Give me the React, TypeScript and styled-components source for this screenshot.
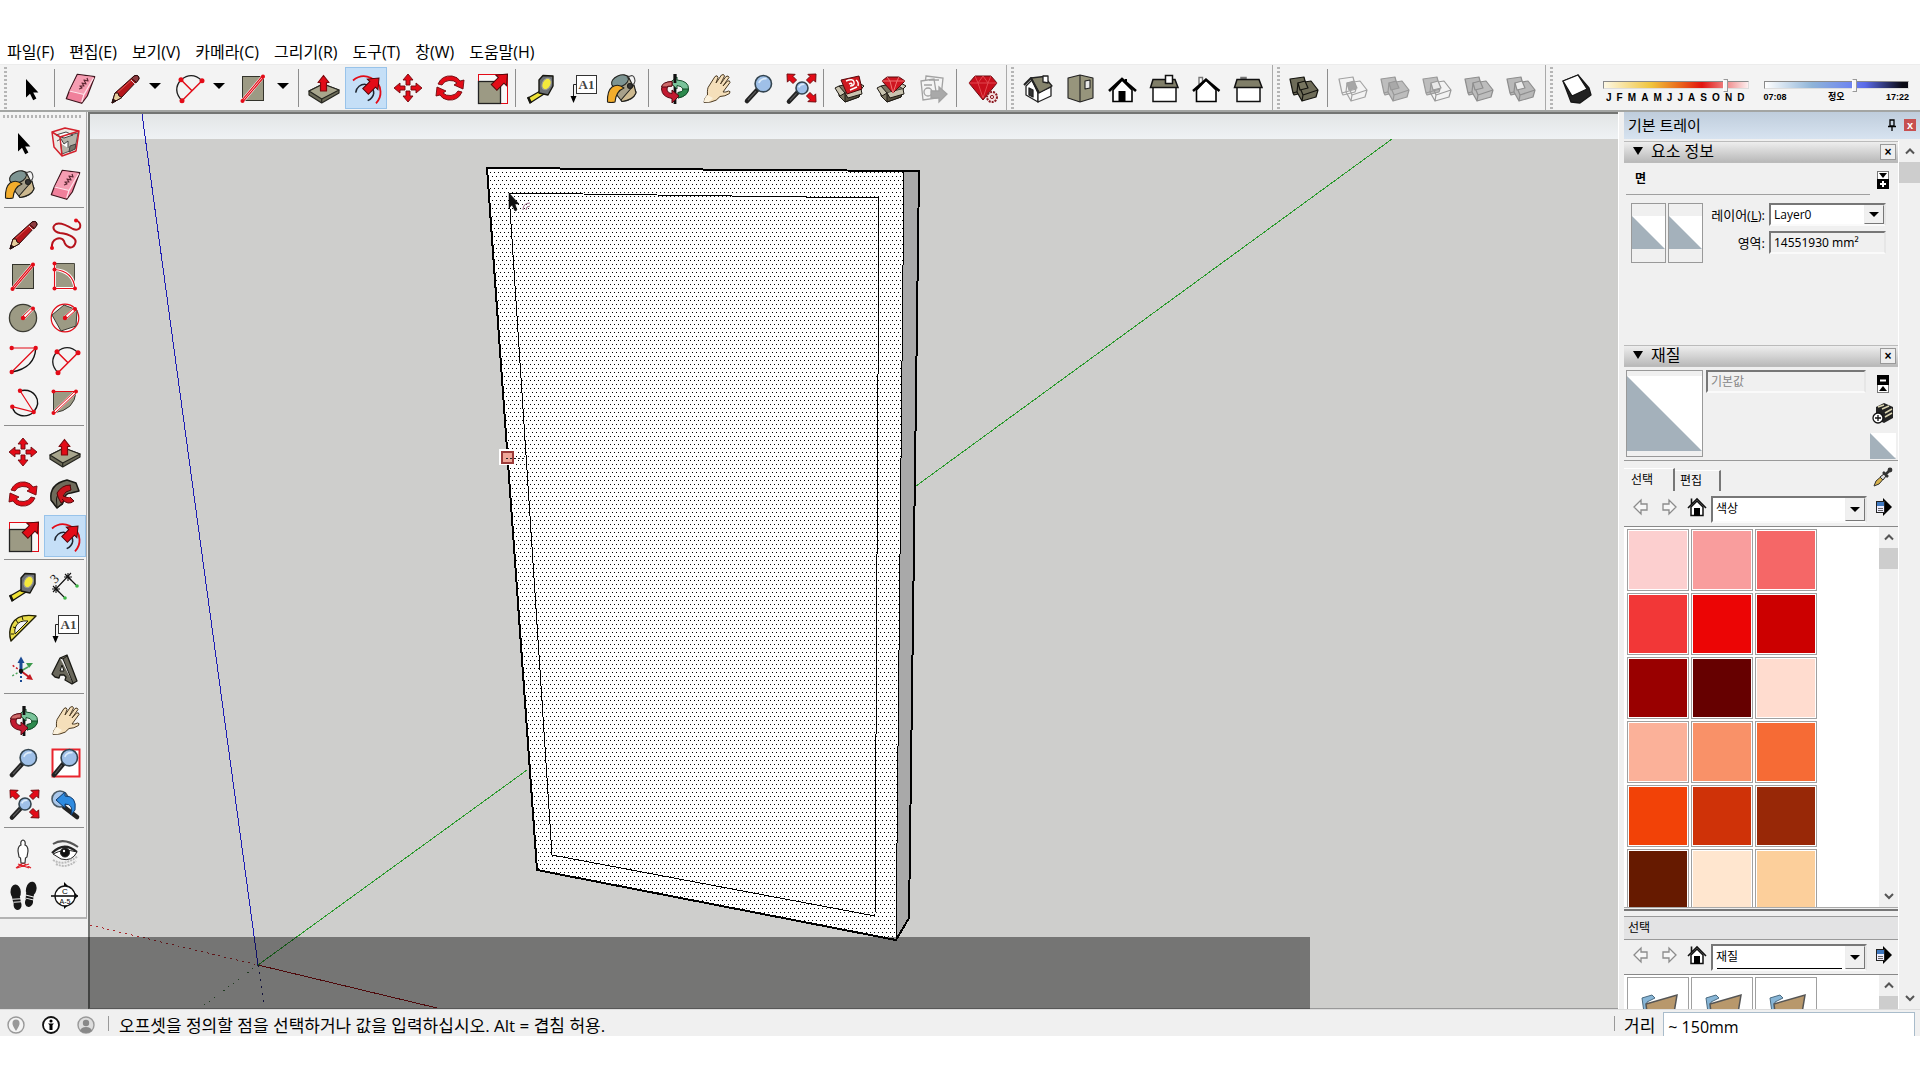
import React from "react";
import styled, { createGlobalStyle, css } from "styled-components";

const Global = createGlobalStyle`
  *, *::before, *::after { box-sizing: border-box; }
  body { margin: 0; background: #fff; color: #000; font-family: "Open Sans", "Noto Sans CJK KR", sans-serif; font-size: 16px; }
  button, input, select { font: inherit; color: inherit; margin: 0; padding: 0; border: 0; background: none; border-radius: 0; outline: 0; }
`;

const RED = "#e30b17";
const OLIVE = "#9c9a84";

/* ---------- icons (all drawn in a 42 × 42 cell) ---------- */

const dot = (x: number, y: number, r = 2) => <circle key={`${x}-${y}`} cx={x} cy={y} r={r} fill={RED} stroke="none" />;
const bigArrow = (x: number, y: number) => (
  <path transform={`translate(${x} ${y}) rotate(45)`} d="M0 0 L7.5 9 H4 V19 H-4 V9 H-7.5 Z" fill={RED} stroke="#4d0608" />
);
const lens = (x: number, y: number, r: number, hx: number, hy: number) => (
  <g>
    <path d={`M${x - r * 0.7} ${y + r * 0.7} L${hx} ${hy}`} stroke="#222" strokeWidth="4.6" strokeLinecap="round" />
    <path d={`M${x - r * 0.9} ${y + r * 0.9} L${hx + 1} ${hy - 1}`} stroke="#5a5a5a" strokeWidth="1.2" />
    <circle cx={x} cy={y} r={r} fill="#9fc0e8" stroke="#33444f" strokeWidth="1.6" />
    <path d={`M${x - r * 0.55} ${y - r * 0.1} Q${x - r * 0.3} ${y - r * 0.7} ${x + r * 0.4} ${y - r * 0.6}`} stroke="#dcebfa" strokeWidth="1.6" fill="none" />
  </g>
);
const solids = (a: string, b: string, c: string, line: string) => (
  <g stroke={line} strokeWidth="1.2" strokeLinejoin="round">
    <path d="M7 12 L21 10 L24 22 L10 26 Z M10 26 L24 22 L23 25 L11 28 Z" fill={a} />
    <path d="M15 16 L28 14 L35 23 L20 28 Z M20 28 L35 23 L33 30 L19 34 Z M15 16 L14 25 L19 34 L20 28 Z" fill={b} />
    <path d="M15 16 L22 14 L25 21 L17 23 Z" fill={c} />
  </g>
);
const carton = (
  <g stroke="#1c1812" strokeWidth="1">
    <path d="M11 19 L25 16 L33 22 L31 30 L17 35 L11 29 Z" fill="#7b7561" />
    <path d="M17 26 L33 22 L31 30 L17 35 Z" fill="#57513f" />
    <path d="M17 26 L11 19 L7 21 L12 29 Z M33 22 L36 19 L29 15 M17 26 L20 31 L34 27 L33 22" fill="#c9c4b0" />
  </g>
);

const ICONS: Record<string, React.ReactNode> = {
  select: <path d="M16 12 V30.5 L20 26.8 L23.2 33.2 L26.4 31.6 L23.2 25.6 L28.4 25.4 Z" fill="#000" />,
  eraser: (
    <g stroke="#3b141c" strokeWidth="1.2" strokeLinejoin="round">
      <path d="M18.3 7.3 L35.7 9.7 L28.3 29 L22.7 36.3 L7.3 31.7 L10.3 23.7 Z" fill="#f0809b" />
      <path d="M18.8 8 L35 10 L26 28 L11 23.3 Z" fill="#f59db2" stroke="none" />
      <path d="M10.5 24 L25 27.5 L34.5 11 M25 27.5 L22.7 35" stroke="#fde4ea" fill="none" />
      <path d="M20 22 l3 -1 l-2 -2 l4 0 l-2 -3 l4 1 l-2 -4 l4 1 l-1 -3" fill="none" stroke="#5c2833" />
    </g>
  ),
  pencil: (
    <g stroke="#2c0a0a" strokeWidth="1" strokeLinejoin="round">
      <path d="M8 36 L11 26 L30 9 Q35 7 35 12 L17 31 Z" fill="#b5161b" />
      <path d="M12 27 L31 10" stroke="#d9544e" />
      <path d="M8 36 L11 26 L14 26 L15 29 L18 30.5 Z" fill="#e5cd9c" />
      <path d="M8 36 L9 32 L12 34 Z" fill="#222" />
      <path d="M27.5 11.5 L32.5 15.5 L35 12 Q35 7 30 9 Z" fill="#8e3c40" />
      <path d="M27 13 L31 17" stroke="#ddd" />
    </g>
  ),
  arc: (
    <g fill="none" strokeWidth="1.3">
      <path d="M14 33.7 Q4 23 13 12.7 Q24 4 34 13.7" stroke="#1b1b1b" />
      <path d="M34 13.7 L14 33.7 M13 12.7 L24 23.7" stroke={RED} strokeWidth="1.5" />
      {dot(13, 12.7, 2.5)}{dot(34, 13.7, 2.5)}{dot(14, 33.7, 2.5)}
    </g>
  ),
  rect: (
    <g>
      <rect x="10.5" y="9.5" width="21" height="24" fill={OLIVE} stroke="#33332b" />
      <path d="M10.5 34 L31 9.5" stroke="#fff" strokeWidth="4" />
      <path d="M11 34.6 L32 10 M9.6 33.6 L30.4 9" stroke={RED} strokeWidth="1.2" />
      {dot(31, 9.5)}{dot(10.5, 34)}
    </g>
  ),
  pushpull: (
    <g stroke="#25251f" strokeWidth="1.2" strokeLinejoin="round">
      <path d="M6 24 L20 17 L36 23 V26 L18.7 36 L6 28 Z" fill="#6c6b58" />
      <path d="M6 24 L20 17 L36 23 L18.7 32 Z" fill="#a8a68d" />
      <path d="M18.7 32 V36" />
      <path d="M20.5 8.5 L26 15.5 H23.5 V24 H17.5 V15.5 H15 Z" fill={RED} stroke="#7d090e" />
    </g>
  ),
  offset: (
    <g fill="none">
      <path d="M8 13.5 C19 4 35 12 35.5 24.5 Q36 31 31 36.3" stroke={RED} strokeWidth="1.8" />
      <path d="M10.7 25.7 C12 14 29 15 28.7 26.3 Q28 31 22.7 33.7" stroke="#1e2530" strokeWidth="1.5" />
      {bigArrow(34, 11)}
    </g>
  ),
  move: <g>{[0, 90, 180, 270].map((a) => <path key={a} transform={`rotate(${a} 21 21)`} d="M21 7 L26 13 H23 V18 H19 V13 H16 Z" fill={RED} stroke="#6e0a0e" strokeWidth=".9" />)}</g>,
  rotate: (
    <g fill={RED} stroke="#6e0a0e" strokeWidth=".9" strokeLinejoin="round">
      {[0, 180].map((a) => <path key={a} transform={`rotate(${a} 21 21)`} d="M9 17 Q13 8 23 9 Q29 10 31 14 L35 13 L34 22 L25 18 L28 16 Q25 13 20 13.5 Q15 14 13 18 Z" />)}
    </g>
  ),
  scale: (
    <g>
      <rect x="7.5" y="7.5" width="29" height="29" fill="#f8f8f8" stroke={RED} />
      <rect x="7.5" y="14.5" width="22" height="22" fill={OLIVE} stroke="#222" strokeWidth="1.3" />
      {bigArrow(36.5, 7)}
    </g>
  ),
  tape: (
    <g stroke="#16160f" strokeLinejoin="round">
      <path d="M8 31 L22 23 L24 27 L10 36 Z" fill="#efe236" strokeWidth="1.4" />
      <path d="M8 30 L11 36" strokeWidth="2.4" />
      <path d="M19 13 L23 8.5 L33 9 V19 L28 28 L19 26 Z" fill="#6c7074" strokeWidth="1.4" />
      <ellipse cx="26.5" cy="17" rx="4.2" ry="6" transform="rotate(28 26.5 17)" fill="#f4e93a" stroke="#999" />
    </g>
  ),
  text: (
    <g>
      <rect x="14.5" y="8.5" width="20" height="18" fill="#fff" stroke="#333" />
      <text x="24.5" y="22" fontFamily="Liberation Serif, serif" fontSize="13" fontWeight="700" textAnchor="middle" fill="#444">A1</text>
      <path d="M14 17.5 H11.5 V30" fill="none" stroke="#222" /><path d="M8.5 29 H14.5 L11.5 36 Z" />
    </g>
  ),
  bucket: (
    <g stroke="#20201c" strokeWidth="1.1" strokeLinejoin="round">
      <path d="M9 15 L24 9 L32 25 Q30 33 18 34.5 L12 27 Z" fill="#a7a08a" />
      <path d="M17 33 L30 18 L32 26 Q29 33 18 34.5 Z" fill="#cdb98f" />
      <ellipse cx="16" cy="14" rx="9" ry="5.5" transform="rotate(-24 16 14)" fill="#7d9492" />
      <path d="M23 11 Q30 5 31 14 Q30 20 24 17" fill="none" stroke="#444" />
      <path d="M3.5 35 Q3 24 8 20 Q14 16 20 21 Q12 24 11 35 Q7 36 3.5 35 Z" fill="#f3ad2c" />
      <circle cx="26" cy="19" r="2.5" fill="#333" />
    </g>
  ),
  orbit: (
    <g strokeLinejoin="round">
      <path d="M22 7 V37" stroke="#111" strokeWidth="2.8" />
      <path d="M24 13 Q36 14 35.5 22 Q35 29 25 31 V25.5 Q30 25 30 22 Q29 19 24 18.5 V22 L17 15.5 L24 10 Z" fill="#79c39a" stroke="#174e2c" />
      <path d="M30 22 H35.5 Q35 29 25 31 V25.5 Q30 25 30 22 Z" fill="#2c8a4d" stroke="#174e2c" />
      <path d="M19 14.5 Q9 15 8.5 22 Q9 30 19 31.5 V36 L26 29 L19 23 V26.5 Q14 26 14 22 Q14 19 19 19 Z" fill="#c21a30" stroke="#560912" />
      <path d="M19 14.5 Q9 15 8.5 20 H14 Q14 19 19 19 Z" fill="#cf6a6a" stroke="#560912" />
      <path d="M22 7 V16" stroke="#111" strokeWidth="2.8" />
    </g>
  ),
  hand: (
    <g stroke="#4b3a22" strokeWidth="1" strokeLinejoin="round" strokeLinecap="round">
      <path d="M9 35 Q9 31 12.5 28 Q12 21 14 19 L20 9.5 Q22.5 7.5 23 10.5 L21 16 L26.5 8 Q29 6.5 29.5 9 L25.5 17 L31 9.5 Q33.5 8 34 10.5 L28 19 L32.5 14 Q35 13 35 15.5 L28 25 Q31 25.5 33.5 24 Q36 24 34.5 26.5 Q30 29.5 25 29.5 Q22 34 16 35 Z" fill="#f5dfba" />
      <path d="M9 35 Q9 31 12.5 28 L18 31 L14 35 Z" fill="#fbf1dc" stroke="none" />
    </g>
  ),
  zoom: lens(26.3, 16.7, 8.2, 10, 34),
  zoomwin: (<g><rect x="8.5" y="8.5" width="27" height="27" fill="#fff" stroke="#e9242d" strokeWidth="2" />{lens(25.3, 16.7, 8.2, 10, 34)}</g>),
  extents: (
    <g>
      {lens(23, 21, 6, 10, 34.5)}
      {[[8, 7, -45], [37, 7, 45], [37, 35, 135]].map(([x, y, a]) => <path key={`${x}${y}`} transform={`translate(${x} ${y}) rotate(${a})`} d="M0 0 L5.5 6 H2.5 V11 H-2.5 V6 H-5.5 Z" fill={RED} stroke="#6e0a0e" strokeWidth=".9" />)}
    </g>
  ),
  previous: (
    <g>
      <path d="M20 24 L33 34" stroke="#222" strokeWidth="4.6" strokeLinecap="round" />
      <circle cx="16" cy="16" r="8" fill="#a9c7ea" stroke="#4a5a66" strokeWidth="1.6" />
      <path d="M12 17 L21 9 V13 Q33 13 31 27 L27 32 Q30 21 21 21 V25 Z" fill="#2e8be0" stroke="#103a6b" />
    </g>
  ),
  warehouse: (<g>{carton}<path d="M13 13 L31 9 L34 22 L19 27 Z" fill="#cf1a21" stroke="#58080b" /><path d="M18 14 q7 -3 8 1 q1 4 -4 4 M21 17 q3 -2 3 1 M22 23 l7 -3 M28 13 q3 2 2 6" fill="none" stroke="#fff" strokeWidth="1.4" /></g>),
  extwarehouse: (<g>{carton}<path d="M12 14 L17 10 H29 L35 14 L23 26 Z" fill="#cf1520" stroke="#58080b" /><path d="M12 14 H35 M17 10 L20 14 L23 26 L27 14 L29 10" fill="none" stroke="#ee7272" /></g>),
  layout: (
    <g fill="#f4f4f4" stroke="#a2a2a2" strokeWidth="1.3">
      <path d="M14 9 L31 11 L29 30 L12 28 Z" /><path d="M9 14 L22 12 L25 31 L11 33 Z" />
      <circle cx="16" cy="25" r="4" /><path d="M17 13 H27 M12 18 H20" />
      <path d="M19 24 H27 V20 L35 27 L27 35 V31 H19 Z" fill="#a9a9a9" />
    </g>
  ),
  gem: (
    <g strokeLinejoin="round">
      <path d="M8 16 L14 9 H30 L36 16 L22 33 Z" fill="#c80f1c" stroke="#6a0a10" />
      <path d="M14 9 L17 16 L22 9 L27 16 L30 9 M8 16 H36 M17 16 L22 31 L27 16" fill="none" stroke="#e0474e" />
      <circle cx="31" cy="30" r="5" fill="#f3dede" stroke="#8b1a22" strokeWidth="2" strokeDasharray="2 1" /><circle cx="31" cy="30" r="1.6" fill="none" stroke="#8b1a22" />
    </g>
  ),
  iso: (
    <g stroke="#222" strokeWidth="1.3" strokeLinejoin="round">
      <path d="M9 19 L15 13 L21 26 V35 L9 28 Z" fill="#fff" /><path d="M21 26 L34 20 V29 L21 35 Z" fill="#fff" />
      <path d="M14 11 L27 9.5 L35 19 L22 26 Z" fill="#85836c" /><path d="M7 18 L14 11 L22 26" fill="none" strokeWidth="2" />
      <path d="M26 9 H31 V16 L26 15 Z" fill="#fff" /><path d="M12 21 L16 23 V30 L12 28 Z" fill="#333" />
    </g>
  ),
  top: (<g stroke="#222" strokeWidth="1.1" strokeLinejoin="round"><path d="M9 11 L21 8 L34 11 V31 L21 35 L9 31 Z" fill="#97957c" /><path d="M21 8 V35" fill="none" /><path d="M26 14 L31 13 V21 L26 22 Z" fill="#e8e8e8" /></g>),
  front: (<g><path d="M12 23 V34.5 H31 V23 L21 13 Z" fill="#fff" stroke="#000" strokeWidth="1.6" /><path d="M8 24 L21 12 L35 24" fill="none" stroke="#000" strokeWidth="2.6" /><rect x="17.5" y="24" width="7" height="11" fill="#000" /><path d="M25 12 V16" stroke="#000" strokeWidth="2" /></g>),
  right: (<g stroke="#111" strokeWidth="1.5"><rect x="10" y="20" width="23" height="14.5" fill="#fff" /><path d="M10 12.5 H32 L35 20.5 H7.5 Z" fill="#807e68" /><rect x="22.5" y="8.5" width="7" height="8" fill="#fff" /></g>),
  back: (<g><path d="M14 10.5 H17.5 V17 H14 Z" fill="#fff" stroke="#777" strokeWidth="1.4" /><path d="M11.5 23 V34.5 H31 V23 L21 13 Z" fill="#fff" stroke="#000" strokeWidth="1.6" /><path d="M8 24 L21 12.5 L34.5 24" fill="none" stroke="#000" strokeWidth="2.4" /></g>),
  left: (<g stroke="#111" strokeWidth="1.5"><rect x="10" y="20" width="23" height="14.5" fill="#fff" /><rect x="14" y="10.5" width="5" height="3" fill="#777" stroke="#777" /><path d="M10 12.5 H32 L35 20.5 H7.5 Z" fill="#807e68" /></g>),
  shell: solids("#6d6b58", "#6f6d59", "#77755f", "#14140f"),
  intersect: solids("none", "none", "#a6a6a6", "#a3a3a3"),
  union: solids("#bdbdbd", "#bdbdbd", "#a9a9a9", "#989898"),
  subtract: solids("#bdbdbd", "none", "#e8e8e8", "#9a9a9a"),
  trim: solids("#b8b8b8", "#bdbdbd", "#b8b8b8", "#8e8e8e"),
  split: solids("#b8b8b8", "#b8b8b8", "#ececec", "#8e8e8e"),
  shadow: (<g stroke="#161616" strokeWidth="1.3" strokeLinejoin="round"><path d="M7 14 L22 8 L33 21 L35 28 L24 36 L15 35 Z" fill="#222" /><path d="M7 14 L22 8 L31 22 L16 29 Z" fill="#fff" /></g>),
  component: (
    <g strokeLinejoin="round">
      <path d="M8 11 L21 7 L35 10 L32 30 L18 35 L10 26 Z" fill="#ece9e4" /><path d="M16 16 L34 12 L31 28 L18 33 Z" fill="#b5b3a8" stroke="#555" />
      <path d="M12 14 L22 11 L29 14 L20 17 Z M13 20 L17 18 L20 23 L24 20 L24 27" fill="#fff" stroke="#444" />
      <path d="M26 25 L32 23 L31 28 L25 31 Z" fill="#77756a" stroke="#444" />
      <path d="M8 11 L21 7 L35 10 L32 30 L18 35 L10 26 Z M8 11 L16 16 L35 10 M16 16 L18 35" fill="none" stroke="#d3212c" strokeWidth="1.5" />
    </g>
  ),
  freehand: (<g fill="none"><path d="M32 7 C39 11 37 19 29 16 C24 13 17 9 12 11 C7 14 10 19 16 20 C25 21 34 25 31 31 C28 38 21 33 20 28 C17 23 7 25 8 35" stroke="#b5131c" strokeWidth="2" />{dot(32, 7.5)}{dot(8, 35)}</g>),
  rotrect: (
    <g fill="none">
      <rect x="10.5" y="8.5" width="20" height="25" fill={OLIVE} /><path d="M10.5 14.5 V8.5 H30.5 V33" stroke="#4a4a40" />
      <path d="M10.5 8 V33.5 H31 Q29 16 10.5 14.5" stroke="#fff" strokeWidth="3" /><path d="M10.5 8 V33.5 H31 Q29 16 10.5 14.5" stroke={RED} strokeWidth="1.2" />
      {dot(10.5, 8.5)}{dot(10.5, 14.5)}{dot(10.5, 33.5)}{dot(31, 33.5)}
    </g>
  ),
  circle: (<g><circle cx="21" cy="21" r="13.6" fill={OLIVE} stroke="#3b3b33" strokeWidth="1.3" /><path d="M21 21 L31 11" stroke="#fff" strokeWidth="4" /><path d="M20 20 L30 10.5 M22 22 L31.5 12" stroke={RED} />{dot(21, 21, 2.2)}{dot(31, 11.5)}</g>),
  polygon: (<g><circle cx="21" cy="21" r="13.8" fill="#f8f8f8" stroke={RED} strokeWidth="1.2" /><path d="M8 18 L20 8 L33 13 L32 29 L17 34 Z" fill={OLIVE} stroke="#3b3b33" /><path d="M21 21 L31 12" stroke="#fff" strokeWidth="4" /><path d="M20 20 L30 11 M22 22 L32 13" stroke={RED} />{dot(21, 21, 2.2)}{dot(31, 12)}</g>),
  arc2: (<g fill="none"><path d="M33.7 9 Q33 29 9.7 33" stroke="#111" strokeWidth="1.4" /><path d="M9.7 9 H33.7 L9.7 33" stroke={RED} strokeWidth="1.2" />{dot(9.7, 9, 2.2)}{dot(33.7, 9, 2.2)}{dot(9.7, 33, 2.2)}</g>),
  arc3: (<g fill="none"><path d="M18 9.7 C32 7 41 19 31.7 31 C24 38 12 35 10.3 25.7" stroke="#111" strokeWidth="1.4" /><path d="M18 9.7 L31.7 31 L10.3 25.7" stroke={RED} strokeWidth="1.2" />{dot(18, 9.7, 2.2)}{dot(31.7, 31, 2.2)}{dot(10.3, 25.7, 2.2)}</g>),
  pie: (<g><path d="M9.5 10.5 H32 Q31 29 9.5 32 Z" fill={OLIVE} stroke="#3b3b33" /><path d="M9.5 32 L32 10.5" stroke="#fff" strokeWidth="3.6" /><path d="M9 31 L31 10 M10 33 L33 11 M9.5 10.5 H32" stroke={RED} />{dot(9.5, 10.5)}{dot(32, 10.5)}{dot(9.5, 32)}</g>),
  follow: (
    <g stroke="#191914" strokeLinejoin="round">
      <path d="M7 27 Q5 11 23 7 L32 10 L35 18 L27 20 Q20 20 19 30 L13 35 Z" fill="#6f6b5b" strokeWidth="1.5" />
      <path d="M13 34 Q9 16 27 12 M19 31 L13 35 L7 27" fill="none" />
      <path d="M13 20 Q18 12 26 12 L27 17 Q21 18 19 23 L25 25 L17 30 L14 24 Z" fill="#c9141d" stroke="#520608" />
      <path d="M18 26 Q24 33 30 28 L26 24" fill="#c9141d" stroke="#520608" />
    </g>
  ),
  dimension: (
    <g fill="none" stroke="#111" strokeWidth="1.1">
      <path d="M9 27 L27 8 M12 24 L20 32 M24 12 L32 20" /><path d="M12 20 V28 M8 24 H16 M9 21 L15 27 M24 8 V16 M20 12 H28 M21 9 L27 15" />
      <text x="8" y="17" transform="rotate(-45 12 14)" fontFamily="Liberation Serif, serif" fontSize="13" fill="#111" stroke="none">3</text>
      <circle cx="33" cy="21" r="1.8" fill="#3db546" stroke="none" /><circle cx="21" cy="33" r="1.8" fill="#3db546" stroke="none" />
    </g>
  ),
  protractor: (<g stroke="#1f1d05" strokeLinejoin="round"><path d="M34 9 Q16 6 10 17 Q6 25 9 34 L34 9 Z" fill="#e9dc49" strokeWidth="1.4" /><path d="M26 14 Q17 13 14 19 Q12 23 13 27 Z" fill="#f4f4f4" /><path d="M11 20 L14 21 M14 13 L16 16 M20 9.5 L21 13 M9 27 L12 27" /></g>),
  axes: (
    <g strokeWidth="2" fill="none">
      <path d="M19 22 V12" stroke="#1a4a94" strokeWidth="3" /><path d="M15.5 14 L19 7.5 L22.5 14 Z" fill="#1a4a94" />
      <path d="M19 22 L26 18" stroke="#4aa35a" strokeWidth="1.5" /><path d="M24 14 L31 14 L27 19 Z" fill="#3c9a4c" />
      <path d="M19 22 L27 28" stroke="#c41820" /><path d="M24 30 L31 31 L28 25 Z" fill="#c41820" />
      <path d="M19 23 V34" stroke="#1a4a94" strokeDasharray="2 2" /><path d="M19 22 L10 27" stroke="#4aa35a" strokeWidth="1.5" strokeDasharray="2 2" /><path d="M19 22 L10 16" stroke="#c41820" strokeWidth="1.5" strokeDasharray="2 2" />
      <circle cx="19" cy="22" r="2.2" fill="#111" />
    </g>
  ),
  text3d: (<g stroke="#191914" strokeLinejoin="round"><path d="M16 9 L23 6 L33 32 L28 35 L21 31 L22 28 L20 26 L16 26 L15 29 L11 28 L8 25 Z" fill="#69675b" strokeWidth="1.3" /><path d="M16 9 L19 10 L29 34 M19 10 L23 7 M18 16 L16 22 L20 22 Z" fill="#e8e8e8" /></g>),
  person: (<g><path d="M14 35 L21 30 L29 35 M16 31 L27 35 M27 31 L15 35" stroke="#e1222b" strokeWidth="1.3" fill="none" /><path d="M21 7 Q24 8 23 12 Q26 13 26 18 L25 24 L23.5 25 L23 30 H19 L18.5 25 L17 24 L16 18 Q16 13 19 12 Q18 8 21 7 Z" fill="#fff" stroke="#333" strokeWidth="1.2" /></g>),
  eye: (
    <g fill="none" stroke="#222">
      <path d="M9 11 Q20 4 34 14" strokeWidth="2" stroke="#555" /><path d="M8 20 Q20 8 33 19" strokeWidth="2.2" />
      <path d="M9 21 Q20 15 33 19 Q28 29 17 26 Z" fill="#fff" /><circle cx="21" cy="19.5" r="4.5" fill="#111" /><circle cx="20" cy="18" r="1.2" fill="#fff" stroke="none" />
      <path d="M9 27 Q20 34 34 23 M12 31 Q22 36 32 28" stroke="#bbb" strokeWidth="2" strokeDasharray="2 1" />
    </g>
  ),
  feet: (
    <g fill="#161616">
      {[[14, 22, -4], [28, 19, 14]].map(([x, y, a]) => (<g key={x} transform={`translate(${x} ${y}) rotate(${a})`}><ellipse cx="0" cy="-5" rx="5.2" ry="7.5" /><ellipse cx="1" cy="8" rx="4" ry="5" /><path d="M-4 0 L4 0 L4.5 6 H-3 Z" /><path d="M-4 2 H5 M-3 5 H5" stroke="#eee" strokeWidth="1" /></g>))}
    </g>
  ),
  section: (
    <g>
      <path d="M20 7 L34 21 L20 34 Z" /><circle cx="21" cy="21" r="10" fill="#fff" stroke="#111" strokeWidth="1.3" />
      <path d="M7 21 H34" stroke="#111" strokeWidth="1.6" />
      <text x="21" y="19" fontFamily="Liberation Sans, sans-serif" fontSize="8" textAnchor="middle">C</text><text x="21" y="28.5" fontFamily="Liberation Sans, sans-serif" fontSize="7" textAnchor="middle">A-5</text>
    </g>
  ),
};

const Glyph = styled.svg`display: block; width: 42px; height: 42px; flex: none;`;
const Icon = ({ name }: { name: string }) => <Glyph viewBox="0 0 42 42" aria-hidden="true">{ICONS[name]}</Glyph>;

/* ---------- frame ---------- */

const Page = styled.div`display: flex; flex-direction: column; height: 100vh; padding: 40px 0 44px;`;
const MenuBar = styled.nav`display: flex; gap: 15px; height: 24px; align-items: center; padding-left: 7px; flex: none;`;
const MenuItem = styled.button`line-height: 24px; white-space: nowrap;`;
const ToolStrip = styled.div`display: flex; flex: none; height: 48px; background: #f3f3f3; border-top: 1px solid #ececec; border-bottom: 2px solid #a3a5a3;`;
const ToolBar = styled.div<{ $grow?: boolean }>`
  display: flex; align-items: center; border-right: 1px solid #aaa; padding: 1px 3px 0 0;
  ${(p) => p.$grow && css`flex: 1; border-right: 0;`}
`;
const Grip = styled.span<{ $flat?: boolean }>`
  flex: none; display: block;
  ${(p) => p.$flat
    ? css`height: 3px; margin: 3px 3px 3px 3px; background: repeating-linear-gradient(90deg, #b5b5b5 0 2px, transparent 2px 4px);`
    : css`width: 3px; height: 42px; margin: 0 3px 0 4px; background: repeating-linear-gradient(180deg, #b5b5b5 0 2px, transparent 2px 4px);`}
`;
const Tool = styled.button<{ $on?: boolean }>`
  width: 42px; height: 42px; flex: none; display: grid; place-items: center;
  ${(p) => p.$on && css`background: #c5dff7; box-shadow: inset 0 0 0 1px #98c3ea;`}
`;
const Rule = styled.span<{ $flat?: boolean }>`
  flex: none; background: #8d8d8d;
  ${(p) => (p.$flat ? css`height: 1px; margin: 2px 2px 5px 4px;` : css`width: 1px; height: 38px; margin: 0 4px 0 2px;`)}
`;
const Gap = styled.span`width: 3px; flex: none;`;
const Drop = styled.button`width: 22px; height: 42px; flex: none; display: grid; place-items: center; padding: 0 4px 4px 0;`;
const Tri = styled.span<{ $s?: number; $h?: number }>`
  display: block; width: 0; height: 0; border: solid transparent; border-top-color: #000;
  border-width: ${(p) => p.$h ?? p.$s ?? 6}px ${(p) => p.$s ?? 6}px 0;
`;

const Work = styled.div`position: relative; flex: 1; min-height: 0; display: flex; background: #f0f0f0;`;
const Caption = styled.div`position: absolute; left: 0; bottom: 0; width: 68.25%; height: 72px; background: rgba(0, 0, 0, 0.43); pointer-events: none;`;
const SideBar = styled.div`width: 88px; flex: none; padding-right: 1px;`;
const Palette = styled.div`background: #f3f3f3; border-right: 1px solid #aaa; border-bottom: 2px solid #b3b3b3; display: flex; flex-direction: column;`;
const ToolGrid = styled.div`display: grid; grid-template-columns: 42px 42px; padding-left: 2px;`;
const Viewport = styled.main`flex: 1; min-width: 0; border: 2px solid #737573; border-right: 0; border-bottom: 1px solid #999; background: #cececc;`;
const Scene = styled.svg`display: block; width: 100%; height: 100%;`;

/* ---------- sun sliders ---------- */

const SunBox = styled.div`display: flex; gap: 15px; padding-left: 5px; flex: 1; padding-right: 8px;`;
const SunCol = styled.label`display: flex; flex-direction: column; flex: 1; min-width: 0; padding-top: 6px;`;
const Range = styled.input<{ $track: string }>`
  appearance: none; display: block; width: 100%; height: 13px; flex: none;
  &::-webkit-slider-runnable-track { height: 8px; background: ${(p) => p.$track}; border: 1px solid #8a8a8a; border-right-color: #ddd; border-bottom-color: #ddd; }
  &::-webkit-slider-thumb { appearance: none; width: 5px; height: 13px; margin-top: -3px; background: #f6f6f6; border: 1px solid #999; border-left-color: #fff; }
`;
const SunText = styled.span`display: flex; justify-content: space-between; padding: 0 4px 0 3px; font: 700 10px/13px "Liberation Sans", "Noto Sans CJK KR", sans-serif;`;
const TimeText = styled(SunText)`padding: 0; font-size: 9px;`;

/* ---------- tray ---------- */

const Tray = styled.aside`width: 302px; flex: none; display: flex; flex-direction: column; min-height: 0; padding-left: 5px; border-left: 1px solid #fff; background: #f0f0f0; font-size: 12px; line-height: 16px;`;
const TrayTitle = styled.header`display: flex; align-items: center; height: 27px; flex: none; padding: 0 4px 2px 4px; background: linear-gradient(#bfcddc, #d7e3f0); font-size: 15px;`;
const Grow = styled.span`flex: 1;`;
const CloseRed = styled.button`width: 12px; height: 12px; margin-left: 8px; background: #c75050; color: #fff; font: 700 11px/10px "Liberation Sans", sans-serif;`;
const TrayBody = styled.div`display: flex; flex: 1; min-height: 0; padding-top: 2px;`;
const TrayMain = styled.div`flex: 1; min-width: 0; display: flex; flex-direction: column; overflow: hidden; border-right: 1px solid #fff;`;
const Scroll = styled.div<{ $w: number }>`width: ${(p) => p.$w}px; flex: none; display: flex; flex-direction: column; align-items: center; background: #f0f0f0;`;
const ScrollBtn = styled.button`height: 21px; width: 100%; flex: none; display: grid; place-items: center; & svg { display: block; }`;
const Thumb = styled.span`width: 100%; height: 21px; background: #cdcdcd;`;
const PanelHead = styled.div`display: flex; align-items: center; height: 22px; flex: none; padding: 0 2px 2px 9px; gap: 8px; border: 1px solid #bbb; border-width: 1px 0; background: linear-gradient(#eee, #b9b9b9); font-size: 16px;`;
const PanelClose = styled.button`width: 16px; height: 16px; margin-top: 2px; background: #eee; border: 1px solid #999; font: 700 12px/12px "Liberation Sans", sans-serif;`;
const InfoBody = styled.div`height: 182px; flex: none; padding: 4px 9px 0 2px;`;
const InfoTop = styled.div`display: flex; justify-content: space-between; height: 27px; padding: 4px 0 0 9px; font-weight: 700;`;
const InfoLine = styled.div`height: 1px; background: #a0a0a0; margin-right: 19px;`;
const InfoRow = styled.div`display: flex; gap: 2px; padding: 8px 3px 0 5px;`;
const Face = styled.svg<{ $w: number; $h: number }>`display: block; flex: none; width: ${(p) => p.$w}px; height: ${(p) => p.$h}px;`;
const Form = styled.div`display: grid; grid-template-columns: 1fr 117px; column-gap: 4px; row-gap: 5px; flex: 1; align-content: start; align-items: center; text-align: right;`;
const FormLabel = styled.label`font-size: 13px; white-space: nowrap;`;
const sunken = css`border: 2px solid; border-color: #777 #e6e6e6 #fafafa #777;`;
const Field = styled.input`${sunken} height: 23px; width: 100%; min-width: 0; padding: 0 3px; background: #f0f0f0; font-family: "Noto Sans", "Noto Sans CJK KR", sans-serif; &::placeholder { color: #868686; opacity: 1; }`;
const SelectBox = styled.div<{ $h: number }>`${sunken} position: relative; height: ${(p) => p.$h}px; flex: 1; min-width: 0; background: #fff; text-align: left;`;
const Choice = styled.select<{ $line?: boolean }>`appearance: none; width: 100%; height: 100%; padding-left: 3px; ${(p) => p.$line && css`background: linear-gradient(#000, #000) 4px 100% / 125px 1px no-repeat;`}`;
const Spin = styled.span`position: absolute; top: 0; right: 0; bottom: 0; width: 20px; display: grid; place-items: center; background: #f0f0f0; border: 1px solid; border-color: #eee #777 #777 #eee; pointer-events: none;`;
const MatTop = styled.div`display: flex; height: 94px; flex: none; padding: 3px 0 0 2px; border-bottom: 1px solid #999;`;
const MatName = styled.div`flex: 1; padding: 0 1px 0 3px;`;
const MatSide = styled.div`width: 31px; display: flex; flex-direction: column; align-items: center; gap: 8px; padding-top: 5px;`;
const Tabs = styled.div`display: flex; align-items: flex-start; height: 31px; flex: none; padding: 6px 5px 0 0;`;
const Tab = styled.button<{ $on?: boolean }>`height: ${(p) => (p.$on ? 23 : 21)}px; margin-top: ${(p) => (p.$on ? 1 : 3)}px; width: ${(p) => (p.$on ? 51 : 46)}px; text-align: left; padding-left: ${(p) => (p.$on ? 7 : 5)}px; border-top: 1px solid #fff; border-right: 2px solid #777; line-height: 16px;`;
const Nav = styled.div`display: flex; align-items: center; height: 35px; flex: none; padding: 0 0 0 3px; border-bottom: 1px solid #888;`;
const NavBtn = styled.button`width: 28px; height: 28px; flex: none; align-self: flex-start; display: grid; place-items: center; padding-top: 2px; & svg { display: block; }`;
const NavMore = styled(NavBtn)`margin-left: 3px;`;
const Swatches = styled.div`display: flex; background: #fff; min-height: 0; overflow: hidden; flex: 1;`;
const SwatchGrid = styled.div`flex: 1; display: grid; grid-template-columns: repeat(3, 62px); grid-auto-rows: 62px; gap: 2px; padding: 2px 0 0 3px; align-content: start;`;
const Swatch = styled.button<{ $c: string }>`border: 1px solid #a0a0a0; padding: 1px; background: ${(p) => p.$c} content-box;`;
const Split = styled.div`height: 9px; flex: none; border-top: 1px solid #aaa; background: linear-gradient(#f0f0f0 1px, #777 1px 3px, #f0f0f0 3px);`;
const SubHead = styled.div`height: 24px; flex: none; border: 1px solid #999; border-width: 1px 0; background: #e3e3e4; padding: 3px 4px;`;
const Folders = styled(Swatches)`flex: none; height: 34px;`;

/* ---------- status bar ---------- */

const Status = styled.footer`display: flex; align-items: center; height: 27px; flex: none; background: #f0f0f0; font-size: 17px; line-height: 20px; border-top: 1px solid #ddd; overflow: hidden;`;
const StatusIcons = styled.div`display: flex; gap: 17px; padding: 4px 13px 0 7px;`;
const Bar = styled.span`width: 1px; height: 15px; background: #999; flex: none;`;
const Message = styled.span`flex: 1; padding: 5px 0 0 10px; white-space: nowrap;`;
const Measure = styled.label`display: flex; align-items: center; gap: 8px; width: 305px; height: 100%; padding: 2px 5px 0 9px;`;
const MeasureText = styled.span`padding-top: 3px;`;
const MeasureInput = styled.input`flex: 1; min-width: 0; height: 100%; border: 1px solid #a9bccb; border-bottom: 0; background: #fff; padding: 5px 0 0 4px; font-size: 16px;`;

const Chevron = ({ down }: { down?: boolean }) => (
  <svg width="10" height="7" viewBox="0 0 10 7" aria-hidden="true"><path d={down ? "M1 1 L5 5 L9 1" : "M1 5.5 L5 1.5 L9 5.5"} fill="none" stroke="#555" strokeWidth="2" /></svg>
);
const FaceSwatch = ({ w, h, pad }: { w: number; h: number; pad: number }) => (
  <Face $w={w} $h={h} viewBox={`0 0 ${w} ${h}`} aria-hidden="true">
    {pad > 0 && <rect x=".5" y=".5" width={w - 1} height={h - 1} fill="#f0f0f0" stroke="#999" />}
    <rect x={pad ? 1 : 0} y={pad === 0 ? 0 : h - w - pad + 2} width={pad ? w - 2 : w} height={w - 2} fill="#fff" />
    <path d={pad === 0 ? `M0 0 L${w} ${h} H0 Z` : `M1 ${h - w - pad + 2} L${w - 1} ${h - pad} H1 Z`} fill="#a4b1bb" />
  </Face>
);
const Expand = ({ flip }: { flip?: boolean }) => (
  <svg width="12" height="18" viewBox="0 0 12 18" aria-hidden="true"><g transform={flip ? "rotate(180 6 9)" : undefined}><rect x=".5" y=".5" width="11" height="17" fill="#fff" stroke="#777" /><rect y="8" width="12" height="10" /><path d="M2 2 H10 L6 7 Z" /><path d={flip ? "M3 12.5 H9" : "M3 13 H9 M6 10 V16"} stroke="#fff" strokeWidth="2" /></g></svg>
);
const NavRow = ({ value, line }: { value: string; line?: boolean }) => (
  <Nav>
    <NavBtn aria-label="뒤로"><svg width="18" height="18" viewBox="0 0 18 18"><path d="M2 9 L9 2 V6 H15 V12 H9 V16 Z" fill="#f6f6f6" stroke="#8c8c8c" strokeWidth="1.3" /></svg></NavBtn>
    <NavBtn aria-label="앞으로"><svg width="18" height="18" viewBox="0 0 18 18"><path d="M16 9 L9 2 V6 H3 V12 H9 V16 Z" fill="#f6f6f6" stroke="#8c8c8c" strokeWidth="1.3" /></svg></NavBtn>
    <NavBtn aria-label="홈"><svg width="20" height="20" viewBox="0 0 20 20"><path d="M4 10 V18.5 H16 V10 L10 4 Z" fill="#fff" stroke="#111" strokeWidth="1.5" /><path d="M1 11 L10 2 L19 11 M4.5 7 V1.5" fill="none" stroke="#111" strokeWidth="1.6" /><rect x="7" y="11" width="6" height="8" /></svg></NavBtn>
    <SelectBox $h={27}><Choice $line={line} aria-label={value} defaultValue={value}><option>{value}</option></Choice><Spin><Tri $s={5} /></Spin></SelectBox>
    <NavMore aria-label="세부사항"><svg width="18" height="18" viewBox="0 0 18 18"><path d="M8 0 L17 9 L8 18 Z" /><rect x="1.5" y="3.5" width="8" height="11" fill="#eef" stroke="#222" /><rect x="2" y="4" width="7" height="4" fill="#3f78c0" /><path d="M3 10.5 H8 M3 12.5 H8" stroke="#666" /></svg></NavMore>
  </Nav>
);
const Folder = () => (
  <svg width="60" height="60" viewBox="0 0 60 60" aria-hidden="true"><path d="M13 19 L23 16 L26 19 L18 23 L20 48 L17 48 Z" fill="#87b5d6" stroke="#4a6a80" /><path d="M17 25 L48 16 L43 46 L20 50 Z" fill="#b8986c" stroke="#555" strokeWidth="1.5" /></svg>
);

const SIDE: string[][] = [
  ["select", "component", "bucket", "eraser"],
  ["pencil", "freehand", "rect", "rotrect", "circle", "polygon", "arc2", "arc", "arc3", "pie"],
  ["move", "pushpull", "rotate", "follow", "scale", "offset"],
  ["tape", "dimension", "protractor", "text", "axes", "text3d"],
  ["orbit", "hand", "zoom", "zoomwin", "extents", "previous"],
  ["person", "eye", "feet", "section"],
];
const COLORS = ["#fccfcf", "#f99d9d", "#f56767", "#f23737", "#ec0505", "#cc0000", "#990000", "#660000", "#ffdccf", "#fbb199", "#f99168", "#f66b35", "#f24207", "#cf3208", "#982807", "#661a00", "#ffe6cf", "#fccf9b"];
const T = ({ n, on }: { n: string; on?: boolean }) => <Tool $on={on} aria-label={n}><Icon name={n} /></Tool>;
const Caret = () => <Drop aria-label="더 보기"><Tri /></Drop>;

export default function App() {
  return (
    <Page>
      <Global />
      <MenuBar>
        {["파일(F)", "편집(E)", "보기(V)", "카메라(C)", "그리기(R)", "도구(T)", "창(W)", "도움말(H)"].map((m) => <MenuItem key={m}>{m}</MenuItem>)}
      </MenuBar>
      <ToolStrip>
        <ToolBar>
          <Grip /><T n="select" /><Rule /><T n="eraser" /><Gap /><T n="pencil" /><Caret /><T n="arc" /><Caret /><T n="rect" /><Caret /><Rule />
          <T n="pushpull" /><T n="offset" on /><T n="move" /><T n="rotate" /><T n="scale" /><Rule />
          <T n="tape" /><T n="text" /><T n="bucket" /><Rule />
          <T n="orbit" /><T n="hand" /><T n="zoom" /><T n="extents" /><Rule />
          <T n="warehouse" /><T n="extwarehouse" /><T n="layout" /><Rule /><T n="gem" />
        </ToolBar>
        <ToolBar><Grip />{["iso", "top", "front", "right", "back", "left"].map((n) => <T key={n} n={n} />)}</ToolBar>
        <ToolBar><Grip /><T n="shell" /><Rule />{["intersect", "union", "subtract", "trim", "split"].map((n) => <T key={n} n={n} />)}</ToolBar>
        <ToolBar $grow>
          <Grip /><T n="shadow" />
          <SunBox>
            <SunCol>
              <Range type="range" aria-label="날짜" min={0} max={100} defaultValue={86} $track="linear-gradient(90deg,#fdf8e4,#f0c43c 33%,#ea6a1c 52%,#e21410 68%,#f08a8a 85%,#fdeeee)" />
              <SunText>{"JFMAMJJASOND".split("").map((c, i) => <span key={i}>{c}</span>)}</SunText>
            </SunCol>
            <SunCol>
              <Range type="range" aria-label="시간" min={0} max={100} defaultValue={63} $track="linear-gradient(90deg,#fff,#8fb4d8 33%,#6f86f0 60%,#5a6ae8 70%,#0a0a14 96%)" />
              <TimeText><span>07:08</span><span>정오</span><span>17:22</span></TimeText>
            </SunCol>
          </SunBox>
        </ToolBar>
      </ToolStrip>

      <Work>
        <SideBar>
          <Palette>
            <Grip $flat />
            {SIDE.map((group, i) => (
              <React.Fragment key={i}>
                {i > 0 && <Rule $flat />}
                <ToolGrid>{group.map((n) => <T key={n} n={n} on={n === "offset"} />)}</ToolGrid>
              </React.Fragment>
            ))}
          </Palette>
        </SideBar>
        <Viewport>
          <Scene aria-label="모델 보기">
            <defs>
              <linearGradient id="sky" x1="0" y1="0" x2="0" y2="1"><stop offset="0" stopColor="#e2e5e6" /><stop offset="1" stopColor="#eff2f4" /></linearGradient>
              <pattern id="dots" width="4" height="8" patternUnits="userSpaceOnUse"><rect width="4" height="8" fill="#fff" /><rect width="1" height="1" /><rect x="2" y="4" width="1" height="1" /></pattern>
            </defs>
            <rect width="100%" height="25" fill="url(#sky)" />
            <g transform="translate(-90 -114)" fill="none" shapeRendering="crispEdges">
              <path d="M142 114 L258 965" stroke="#1c1cb4" />
              <path d="M258 965 L527 770 M916 486 L1392 139" stroke="#2a9a2c" />
              <path d="M258 965 L437 1008" stroke="#8a1014" />
              <path d="M90 925 L258 965" stroke="#a8282c" strokeDasharray="2 4" />
              <path d="M258 965 L203 1006" stroke="#3a6a3a" strokeDasharray="1 5" />
              <path d="M258 965 L264 1006" stroke="#20206a" strokeDasharray="2 5" />
              <path d="M903 171 L919 171 L909 918 L896 940 Z" fill="#a9a9a9" />
              <path d="M487 168 L904 171 L896 940 L537 870 Z" fill="url(#dots)" />
              <path d="M904 171 L896 940" stroke="#000" />
              <path d="M487 168 L919 171 L909 918 L896 940 L537 870 Z" stroke="#000" strokeWidth="2" strokeLinejoin="round" />
              <path d="M509 193 L879 198 L875 916 L552 855 Z" stroke="#000" />
              <g shapeRendering="auto">
                <path d="M509 193 V208 L512 205 L515 211 L517 210 L515 204 H519 Z" fill="#111" stroke="#000" strokeWidth=".5" />
                <path d="M523 210 Q523 203 530 203 M526 210 Q526 206 530 206" stroke="#a0708a" />
              </g>
              <rect x="499" y="449" width="16" height="16" fill="#fff" /><rect x="502" y="452" width="11" height="11" fill="#f0a698" stroke="#9b3a38" strokeWidth="2" />
              <path d="M506 458 H524" stroke="#222" strokeDasharray="2 2" />
            </g>
          </Scene>
        </Viewport>
        <Tray>
          <TrayTitle>
            기본 트레이<Grow />
            <button aria-label="고정"><svg width="8" height="12" viewBox="0 0 8 12"><path d="M2 1 H6 V7 H2 Z M0 7.5 H8 M4 8 V12" fill="none" stroke="#000" strokeWidth="1.3" /></svg></button>
            <CloseRed aria-label="닫기">x</CloseRed>
          </TrayTitle>
          <TrayBody>
            <TrayMain>
              <PanelHead><Tri $s={5} $h={8} />요소 정보<Grow /><PanelClose aria-label="닫기">×</PanelClose></PanelHead>
              <InfoBody>
                <InfoTop>면<Expand /></InfoTop>
                <InfoLine />
                <InfoRow>
                  <FaceSwatch w={35} h={60} pad={14} /><FaceSwatch w={35} h={60} pad={14} />
                  <Form>
                    <FormLabel htmlFor="layer">레이어(<u>L</u>):</FormLabel>
                    <SelectBox $h={23}><Choice id="layer" defaultValue="Layer0"><option>Layer0</option></Choice><Spin><Tri $s={5} /></Spin></SelectBox>
                    <FormLabel htmlFor="area">영역:</FormLabel>
                    <Field id="area" readOnly value="14551930 mm²" />
                  </Form>
                </InfoRow>
              </InfoBody>
              <PanelHead><Tri $s={5} $h={8} />재질<Grow /><PanelClose aria-label="닫기">×</PanelClose></PanelHead>
              <MatTop>
                <FaceSwatch w={77} h={87} pad={6} />
                <MatName><Field aria-label="재질 이름" placeholder="기본값" /></MatName>
                <MatSide>
                  <Expand flip />
                  <svg width="24" height="24" viewBox="0 0 24 24" aria-hidden="true"><path d="M5 6 L13 2 L22 6 V17 L13 22 L5 18 Z" fill="#222" /><path d="M7 6 L13 4 M11 8 L18 5 M14 12 L21 8 M14 16 L21 12" stroke="#d9d3b0" strokeWidth="1.5" /><circle cx="7" cy="17" r="5" fill="#fff" stroke="#111" strokeWidth="1.3" /><path d="M4 17 H10 M7 14 V20" stroke="#111" strokeWidth="1.3" /></svg>
                  <FaceSwatch w={26} h={26} pad={0} />
                </MatSide>
              </MatTop>
              <Tabs>
                <Tab $on>선택</Tab><Tab>편집</Tab><Grow />
                <button aria-label="색 추출"><svg width="20" height="20" viewBox="0 0 20 20"><path d="M1 19 L3 14 L11 7 L13 9 L6 17 Z" fill="#d8b24c" stroke="#333" /><path d="M7 10 L11 7 L13 9 L10 13 Z" fill="#ddd" stroke="#333" /><path d="M10 5 L15 10 M12 8 L16.5 3.5" stroke="#333" strokeWidth="2.6" /><circle cx="17" cy="3" r="2.4" fill="#333" /></svg></button>
              </Tabs>
              <NavRow value="색상" />
              <Swatches>
                <SwatchGrid>{COLORS.map((c) => <Swatch key={c} $c={c} aria-label={c} />)}</SwatchGrid>
                <Scroll $w={19}><ScrollBtn aria-label="위로"><Chevron /></ScrollBtn><Thumb /><Grow /><ScrollBtn aria-label="아래로"><Chevron down /></ScrollBtn></Scroll>
              </Swatches>
              <Split />
              <SubHead>선택</SubHead>
              <NavRow value="재질" line />
              <Folders>
                <SwatchGrid>{[1, 2, 3].map((n) => <Swatch key={n} $c="#fff" aria-label={`폴더 ${n}`}><Folder /></Swatch>)}</SwatchGrid>
                <Scroll $w={19}><ScrollBtn aria-label="위로"><Chevron /></ScrollBtn><Thumb /></Scroll>
              </Folders>
            </TrayMain>
            <Scroll $w={21}><ScrollBtn aria-label="위로"><Chevron /></ScrollBtn><Thumb /><Grow /><ScrollBtn aria-label="아래로"><Chevron down /></ScrollBtn></Scroll>
          </TrayBody>
        </Tray>
        <Caption />
      </Work>

      <Status>
        <StatusIcons>
          <svg width="18" height="18" viewBox="0 0 18 18" aria-hidden="true"><circle cx="9" cy="9" r="8" fill="#f4f4f4" stroke="#999" strokeWidth="1.4" /><path d="M9 15 Q5 9 5.500 7 A3.5 3.5 0 0 1 12.5 7 Q13 9 9 15 Z" fill="#999" /></svg>
          <svg width="18" height="18" viewBox="0 0 18 18" aria-hidden="true"><circle cx="9" cy="9" r="8" fill="#fff" stroke="#111" strokeWidth="1.8" /><circle cx="9" cy="5" r="1.6" /><path d="M6 7.5 H12 L10.5 9 V14 H7.5 V9 Z" /></svg>
          <svg width="18" height="18" viewBox="0 0 18 18" aria-hidden="true"><circle cx="9" cy="9" r="8" fill="#ddd" stroke="#999" strokeWidth="1.4" /><circle cx="9" cy="7" r="3.2" fill="#888" /><path d="M3 15 Q4 11 9 11 Q14 11 15 15 Q9 19 3 15 Z" fill="#888" /></svg>
        </StatusIcons>
        <Bar />
        <Message>오프셋을 정의할 점을 선택하거나 값을 입력하십시오. Alt = 겹침 허용.</Message>
        <Bar />
        <Measure><MeasureText>거리</MeasureText><MeasureInput defaultValue="~ 150mm" /></Measure>
      </Status>
    </Page>
  );
}
